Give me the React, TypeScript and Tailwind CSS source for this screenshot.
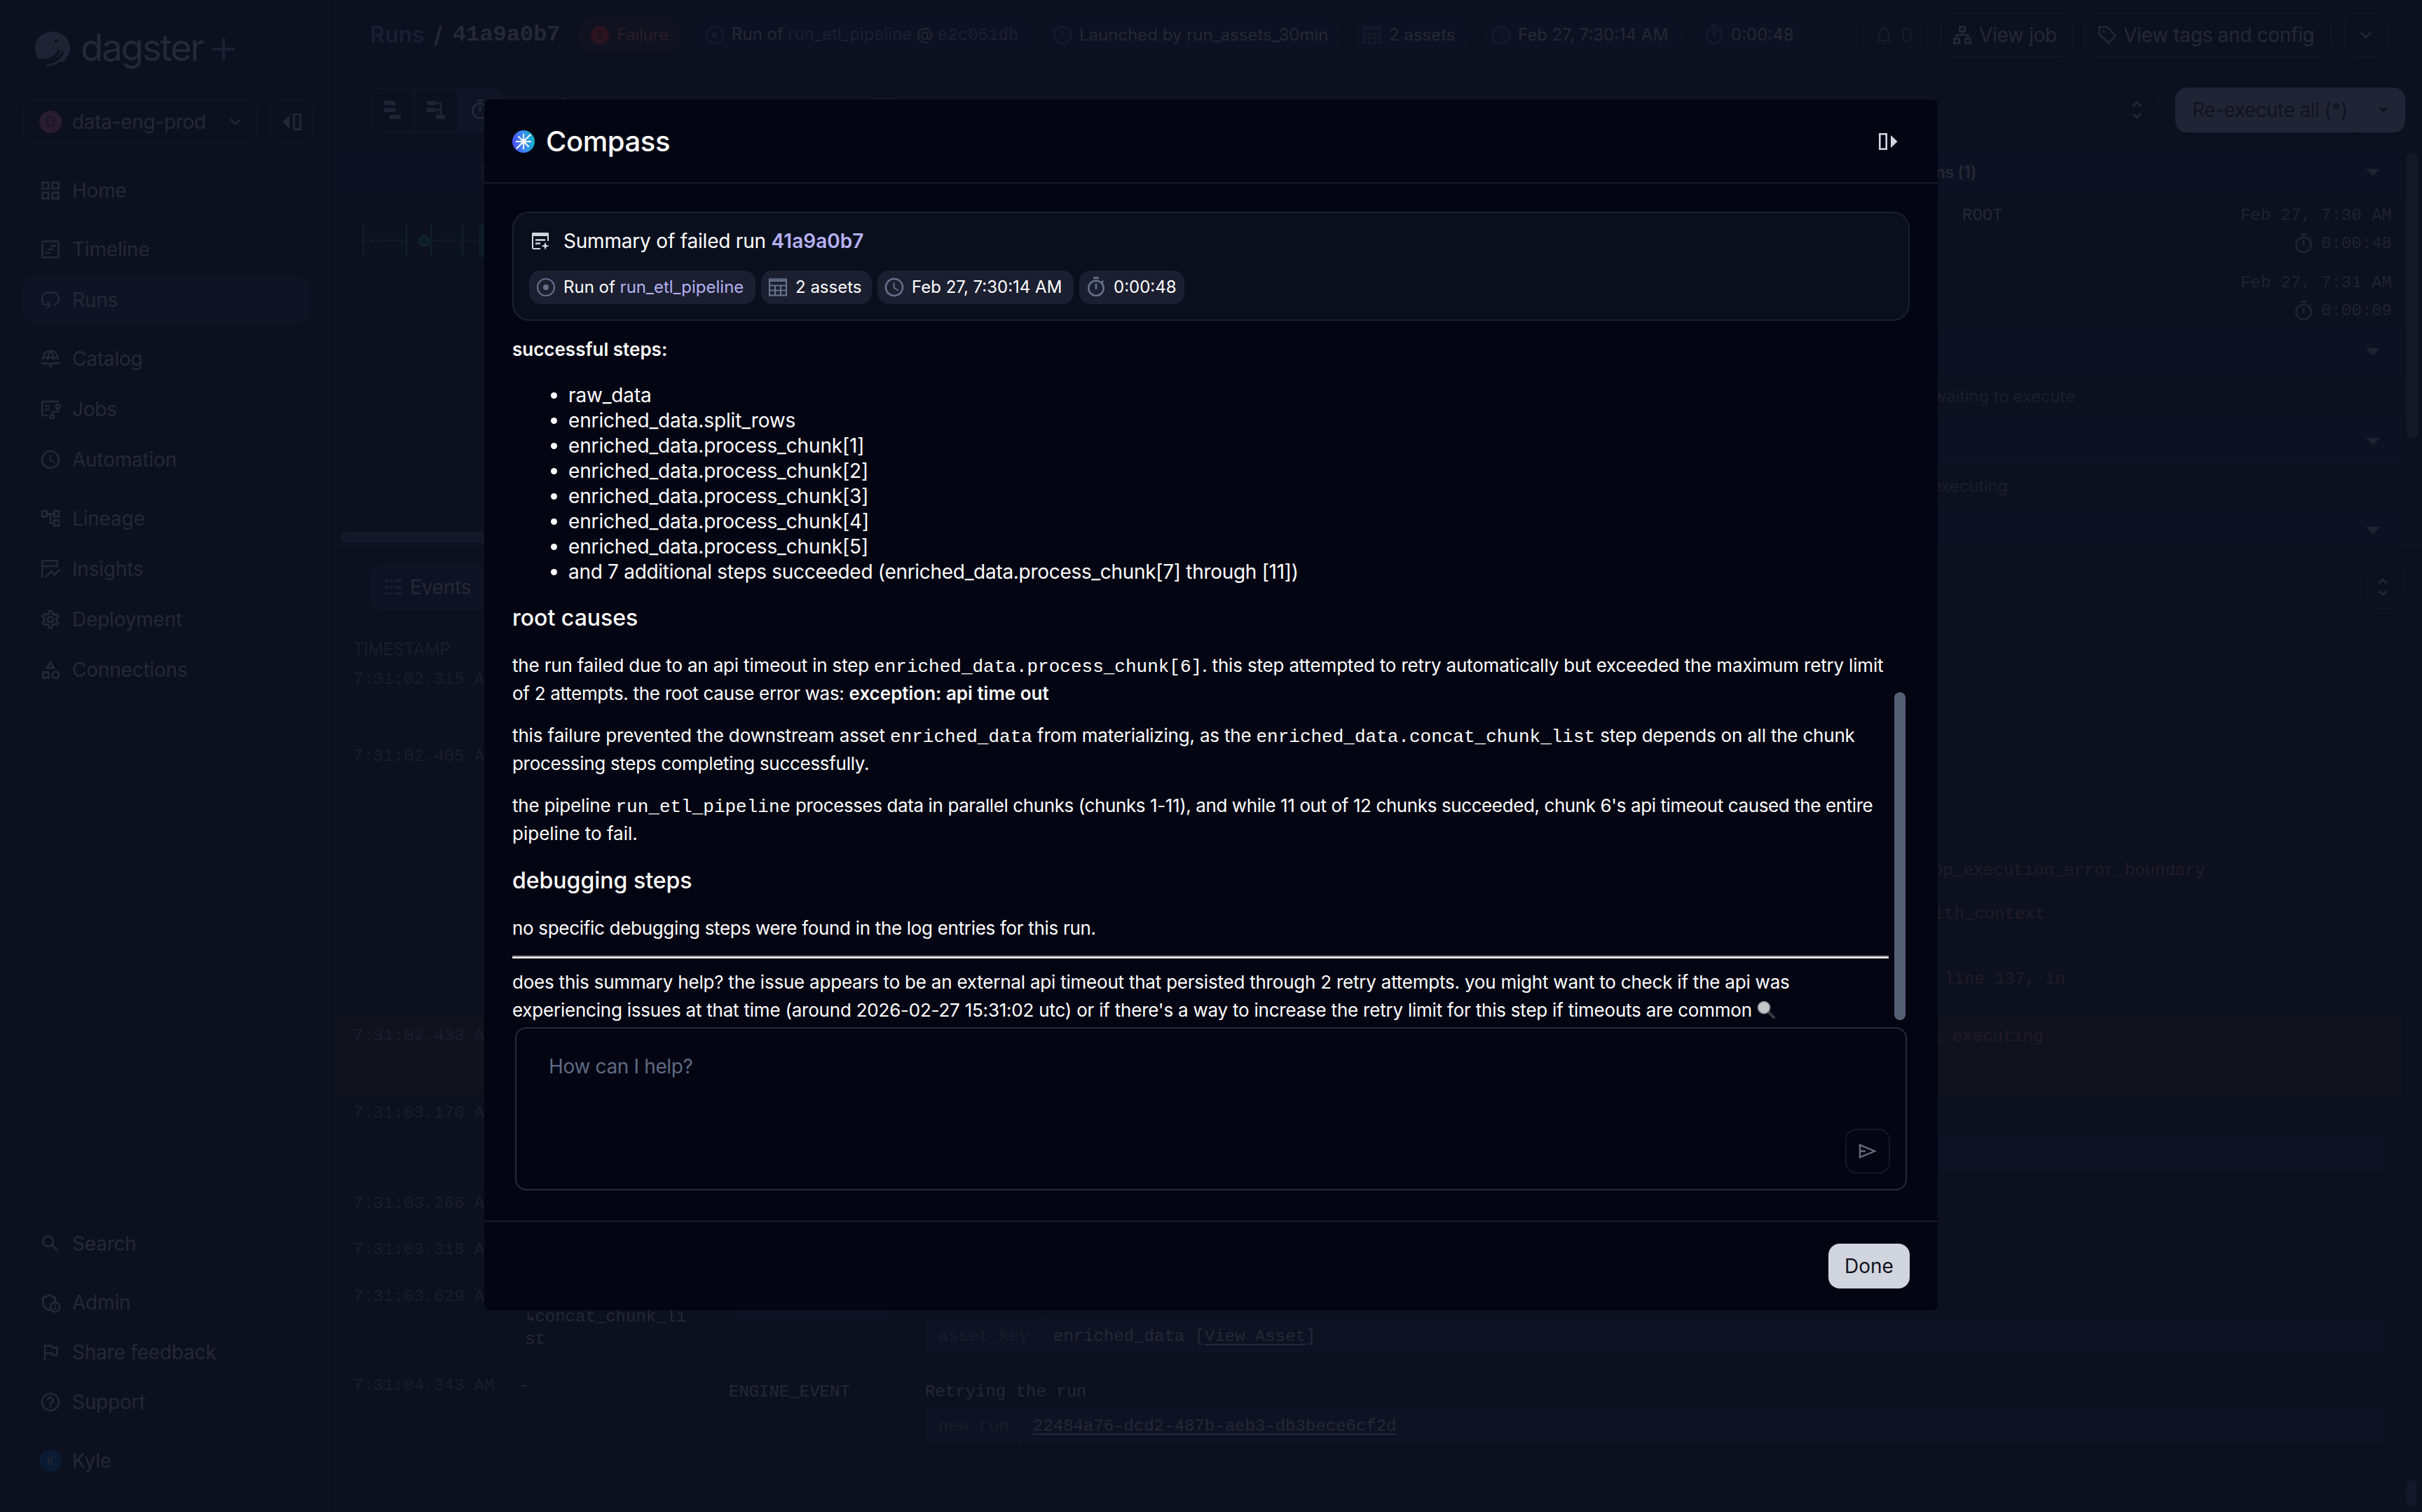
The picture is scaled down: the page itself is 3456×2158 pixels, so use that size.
import type { ReactNode } from "react";
import {
  MdAccessTime,
  MdError,
  MdGridView,
  MdHelpOutline,
  MdOutlineAccountTree,
  MdOutlineAdminPanelSettings,
  MdOutlineCategory,
  MdOutlineFlag,
  MdOutlineNotifications,
  MdOutlineSettings,
  MdOutlineTimer,
  MdSearch,
} from "react-icons/md";

type SvgProps = { className?: string };

/* ---------- Icons ---------- */

function TimelineIcon({ className }: SvgProps) {
  return (
    <svg viewBox="0 0 32 32" className={className} fill="none" stroke="currentColor" strokeWidth="2.6">
      <rect x="4.5" y="4.5" width="23" height="23" rx="1.5" />
      <path d="M16 11h8M12 16h8M8 21h8" />
    </svg>
  );
}

function RunsIcon({ className }: SvgProps) {
  return (
    <svg viewBox="0 0 32 32" className={className} fill="none" stroke="currentColor" strokeWidth="2.4">
      <path d="M12 23.5C7 23 4.2 20 4.2 16V14c0-4 3-8.500 8-8.500h7.600c5 0 8 4.500 8 8.500v1c0 4-2.800 7.500-7 8.500" />
      <path d="M11 18.500l4.500 5-4.500 4.500" />
    </svg>
  );
}

function CatalogIcon({ className }: SvgProps) {
  return (
    <svg viewBox="0 0 32 32" className={className} fill="none" stroke="currentColor" strokeWidth="2.4">
      <path d="M5 17.5C5 9.500 10 4.500 16 4.500s11 5 11 13M5 14.500h22M12 18c0-6 1.500-10 4-13M20 18c0-6-1.500-10-4-13" />
      <path d="M3 22.5h7.500c3 0 5 1.500 5.500 4 .5-2.500 2.500-4 5.500-4H29M16 25v4" strokeWidth="2.8" />
    </svg>
  );
}

function JobsIcon({ className }: SvgProps) {
  return (
    <svg viewBox="0 0 32 32" className={className} fill="none" stroke="currentColor" strokeWidth="2.5">
      <path d="M28 5H5.500C4.700 5 4.200 5.500 4.200 6.300v17.400c0 .8.500 1.300 1.300 1.300H12" />
      <path d="M8 11.500h7M8 16.500h7M26.500 15v4.500h-8V24" />
      <circle cx="26.500" cy="12" r="2.800" />
      <circle cx="18.500" cy="26.500" r="2.800" />
    </svg>
  );
}

function InsightsIcon({ className }: SvgProps) {
  return (
    <svg viewBox="0 0 32 32" className={className} fill="none" stroke="currentColor" strokeWidth="2.5">
      <path d="M6 27.500c-1 0-1.800-.6-1.800-1.500V5.500C4.200 4.700 4.700 4.200 5.500 4.200h19c.8 0 1.300.5 1.300 1.300V12H4.200" />
      <path d="M9 28l8-9 4.500 5.500L30 16.500" />
    </svg>
  );
}

function RunOfIcon({ className }: SvgProps) {
  return (
    <svg viewBox="0 0 32 32" className={className}>
      <circle cx="16" cy="16" r="12" fill="none" stroke="currentColor" strokeWidth="2.2" />
      <circle cx="16" cy="16" r="4" fill="currentColor" />
    </svg>
  );
}

function TableIcon({ className }: SvgProps) {
  return (
    <svg viewBox="0 0 32 32" className={className} fill="none" stroke="currentColor" strokeWidth="2.2">
      <rect x="4" y="4.500" width="24" height="23" />
      <path d="M4 7h24M4 13.500h24M4 20.500h24M12 13.500v14M20 13.500v14" />
    </svg>
  );
}

function SitemapIcon({ className }: SvgProps) {
  return (
    <svg viewBox="0 0 32 32" className={className} fill="none" stroke="currentColor" strokeWidth="2.6">
      <path d="M12.300 4.300h7.400v6.400h-7.400zM4.300 21.300h7.400v6.400H4.300zM20.300 21.300h7.400v6.400h-7.400zM16 10.700V16M8 21v-5h16v5" />
    </svg>
  );
}

function TagIcon({ className }: SvgProps) {
  return (
    <svg viewBox="0 0 32 32" className={className} fill="none" stroke="currentColor" strokeWidth="2.4">
      <path d="M4.500 4.500H16l11.500 12L18 27.500 4.500 15z" strokeLinejoin="round" />
      <circle cx="11" cy="11" r="1.800" fill="currentColor" stroke="none" />
    </svg>
  );
}

function ChevronDown({ className }: SvgProps) {
  return (
    <svg viewBox="0 0 16 10" className={className} fill="none" stroke="currentColor" strokeWidth="2.4">
      <path d="M1 1.200l7 7 7-7" />
    </svg>
  );
}

function SortChevrons({ className }: SvgProps) {
  return (
    <svg viewBox="0 0 14 26" className={className} fill="none" stroke="currentColor" strokeWidth="2.6">
      <path d="M1.500 7.500L7 2l5.500 5.500M1.500 18.500L7 24l5.500-5.500" />
    </svg>
  );
}

function Caret({ className }: SvgProps) {
  return (
    <svg viewBox="0 0 20 10" className={className} fill="currentColor">
      <path d="M0 0h20L10 10z" />
    </svg>
  );
}

function CollapseIcon({ className }: SvgProps) {
  return (
    <svg viewBox="0 0 28 24" className={className}>
      <rect x="1.300" y="1.300" width="9.400" height="21.400" fill="none" stroke="currentColor" strokeWidth="2.6" />
      <path d="M17 3l9.500 9L17 21z" fill="currentColor" />
    </svg>
  );
}

function SummaryIcon({ className }: SvgProps) {
  return (
    <svg viewBox="0 0 24 24" className={className} fill="none" stroke="currentColor" strokeWidth="2">
      <path d="M12 23H2.500C1.600 23 1 22.400 1 21.500V3h22v9" />
      <path d="M1 0h22a1 1 0 011 1v4H0V1a1 1 0 011-1z" fill="currentColor" stroke="none" />
      <path d="M5 10.500h14M5 15.500h7" strokeWidth="2.4" />
      <path d="M19 13.500l1.500 4 4 1.500-4 1.500-1.500 4-1.500-4-4-1.500 4-1.500z" fill="currentColor" stroke="none" />
    </svg>
  );
}

function SendIcon({ className }: SvgProps) {
  return (
    <svg viewBox="0 0 26 22" className={className} fill="none" stroke="currentColor" strokeWidth="2.4">
      <path d="M2 2.200L23 11 2 19.800V2.200zM2 11h8" />
    </svg>
  );
}

function CompassIcon({ className }: SvgProps) {
  return (
    <svg viewBox="0 0 32 32" className={className}>
      <defs>
        <linearGradient id="compass" x1="0" y1="0.6" x2="1" y2="0.4">
          <stop offset="0" stopColor="#4a4af5" />
          <stop offset="0.5" stopColor="#3b8cf6" />
          <stop offset="1" stopColor="#12b3c4" />
        </linearGradient>
      </defs>
      <circle cx="16" cy="16" r="16" fill="url(#compass)" />
      {/* four thin rays plus a long north-east / south-west needle */}
      <g stroke="#fff" strokeLinecap="round" strokeWidth="1.9">
        <path d="M16 5.800v20.400M5.800 16h20.400M9 9l14 14" />
        <path d="M6.500 25.500l19-19" strokeWidth="2.2" />
      </g>
      <circle cx="16" cy="16" r="3.400" fill="#fff" />
    </svg>
  );
}

function DagsterLogo({ className }: SvgProps) {
  return (
    <svg viewBox="0 0 50 50" className={className}>
      <path
        fill="currentColor"
        d="M25 0C10 0 0 11 0 24c0 6 2 11 4.500 14.500C18 40 28 37 33 27c1-2 3.500-.5 2.800 1.300C32 37 25 41 15 42c7 .5 17-1 23-13 1-2 3.600-.6 2.800 1.400C36 41 28 45 17.500 46.500c-1.500.5-1.200 3 .5 3 5 0 12-2 18-7 1 2 4.500 1.500 5.500-.5C46 36 50 31 50 24 50 11 40 0 25 0z"
      />
      <circle cx="30" cy="13.500" r="4.500" fill="#2b2a33" />
      <circle cx="30" cy="13.500" r="3" fill="#0d101f" />
      <path d="M5 41.500c10 4 24 0 29.500-14M20 46c9-2 16-7 19-16" fill="none" stroke="#0d101f" strokeWidth="1.6" />
    </svg>
  );
}

/* ---------- Left navigation ---------- */

function NavItem({ icon, label, active }: { icon: ReactNode; label: string; active?: boolean }) {
  return (
    <div
      className={
        active
          ? "flex h-[68px] items-center rounded-2xl bg-[#0f1324] pl-6"
          : "flex h-[68px] items-center pl-6"
      }
    >
      <span className="flex w-8 justify-center">{icon}</span>
      <span className="ml-[15px] whitespace-nowrap text-[28px] tracking-[-0.2px]">{label}</span>
    </div>
  );
}

function NavDivider() {
  return <div className="my-[7px] h-[2px] bg-[#0f1222]" />;
}

function Sidebar() {
  return (
    <aside className="flex h-[2158px] w-[480px] shrink-0 flex-col border-r-2 border-[#0f1222] pl-8 pr-[38px] text-[#252836]">
      <div className="mt-[40px] flex h-[60px] items-center pl-[18px]">
        <DagsterLogo className="h-[50px] w-[50px] text-[#202333]" />
        <span className="ml-[15px] w-[177px] whitespace-nowrap pb-1 text-[53px] leading-[60px] tracking-[-2.3px]">
          dagster
        </span>
        <svg viewBox="0 0 32 32" className="ml-[11px] h-8 w-8 text-[#1d2033]" stroke="currentColor" strokeWidth="4">
          <path d="M16 0v32M0 16h32" />
        </svg>
      </div>

      <div className="-mr-2 mt-[42px] flex gap-4">
        <div className="flex h-16 w-[336px] shrink-0 items-center rounded-2xl border-2 border-[#111526] pl-[22px] pr-[22px]">
          <span className="flex h-8 w-8 items-center justify-center rounded-full bg-[#2a1c30] text-[20px] text-[#151526]">
            D
          </span>
          <span className="ml-[15px] flex-1 whitespace-nowrap text-[28px] tracking-[-0.3px]">data-eng-prod</span>
          <ChevronDown className="h-[10px] w-4" />
        </div>
        <div className="flex h-16 w-16 shrink-0 items-center justify-center rounded-2xl border-2 border-[#111526]">
          <CollapseIcon className="h-6 w-7 rotate-180" />
        </div>
      </div>

      <nav className="mt-8 flex flex-col">
        <NavItem icon={<MdGridView className="h-[34px] w-[34px] shrink-0" />} label="Home" />
        <NavDivider />
        <NavItem icon={<TimelineIcon className="h-8 w-8" />} label="Timeline" />
        <div className="h-1" />
        <NavItem icon={<RunsIcon className="h-8 w-8" />} label="Runs" active />
        <NavDivider />
        <NavItem icon={<CatalogIcon className="h-8 w-8" />} label="Catalog" />
        <div className="h-1" />
        <NavItem icon={<JobsIcon className="h-8 w-8" />} label="Jobs" />
        <div className="h-1" />
        <NavItem icon={<MdAccessTime className="h-8 w-8" />} label="Automation" />
        <NavDivider />
        <NavItem icon={<MdOutlineAccountTree className="h-8 w-8" />} label="Lineage" />
        <div className="h-1" />
        <NavItem icon={<InsightsIcon className="h-8 w-8" />} label="Insights" />
        <div className="h-1" />
        <NavItem icon={<MdOutlineSettings className="h-8 w-8" />} label="Deployment" />
        <div className="h-1" />
        <NavItem icon={<MdOutlineCategory className="h-8 w-8" />} label="Connections" />
      </nav>

      <nav className="mb-[39px] mt-auto flex flex-col">
        <NavItem icon={<MdSearch className="h-8 w-8" />} label="Search" />
        <NavDivider />
        <NavItem icon={<MdOutlineAdminPanelSettings className="h-8 w-8" />} label="Admin" />
        <div className="h-[3px]" />
        <NavItem icon={<MdOutlineFlag className="h-8 w-8" />} label="Share feedback" />
        <div className="h-[3px]" />
        <NavItem icon={<MdHelpOutline className="h-8 w-8" />} label="Support" />
        <NavDivider />
        <NavItem
          icon={
            <span className="flex h-8 w-8 items-center justify-center rounded-full bg-[#0b1a33] text-[16px]">K</span>
          }
          label="Kyle"
        />
      </nav>
    </aside>
  );
}

/* ---------- Run header and toolbar ---------- */

function HeaderTag({ className, icon, children }: { className: string; icon: ReactNode; children: ReactNode }) {
  return (
    <div className={`flex h-12 shrink-0 items-center gap-2 whitespace-nowrap rounded-2xl text-[24px] ${className}`}>
      {icon}
      <span>{children}</span>
    </div>
  );
}

function RunHeader() {
  return (
    <header className="flex h-[102px] shrink-0 items-center border-b-2 border-[#0f1222] pl-[48px] text-[#252836]">
      <h1 className="flex w-[298px] shrink-0 whitespace-nowrap text-[32px] font-semibold">
        <span className="w-[91px] text-[#1b1e33]">Runs</span>
        <span className="w-[27px]">/</span>
        <span className="font-['Liberation_Mono',monospace]">41a9a0b7</span>
      </h1>
      <div className="flex w-[1831px] gap-6">
        <HeaderTag
          className="w-[144px] bg-[#10121f] pl-[14px] tracking-[-0.3px] text-[#2a1d26]"
          icon={<MdError className="h-8 w-8 shrink-0 text-[#2a1420]" />}
        >
          Failure
        </HeaderTag>
        <HeaderTag
          className="w-[476px] bg-[#0e1121] pl-[10px]"
          icon={<RunOfIcon className="h-8 w-8 shrink-0 text-[#171b2a]" />}
        >
          Run of <span className="text-[#1d1f35]">run_etl_pipeline</span> @{" "}
          <span className="font-['Liberation_Mono',monospace] text-[#1d1f35]">e2c051db</span>
        </HeaderTag>
        <HeaderTag
          className="w-[418px] bg-[#0e1121] pl-[6px]"
          icon={<MdAccessTime className="h-8 w-8 shrink-0 text-[#171b2a]" />}
        >
          Launched by run_assets_30min
        </HeaderTag>
        <HeaderTag
          className="w-[160px] bg-[#0e1121] pl-[6px]"
          icon={<TableIcon className="h-8 w-8 shrink-0 text-[#171b2a]" />}
        >
          2 assets
        </HeaderTag>
        <HeaderTag
          className="w-[280px] bg-[#0e1121] pl-[6px]"
          icon={<MdAccessTime className="h-8 w-8 shrink-0 text-[#171b2a]" />}
        >
          Feb 27, 7:30:14 AM
        </HeaderTag>
        <HeaderTag
          className="w-[146px] bg-[#0e1121] pl-[6px]"
          icon={<MdOutlineTimer className="h-8 w-8 shrink-0 text-[#171b2a]" />}
        >
          0:00:48
        </HeaderTag>
      </div>
      <div className="flex gap-4 whitespace-nowrap text-[28px] tracking-[-0.3px]">
        <div className="flex h-16 w-[95px] items-center gap-2 rounded-2xl border-2 border-[#0f1222] pl-[13px] text-[#171b2a]">
          <MdOutlineNotifications className="h-8 w-8" />0
        </div>
        <div className="flex h-16 w-[191px] items-center gap-2 rounded-2xl border-2 border-[#111526] pl-[14px]">
          <SitemapIcon className="h-8 w-8" />
          View job
        </div>
        <div className="flex h-16 w-[353px] items-center gap-[7px] rounded-2xl border-2 border-[#111526] pl-[14px]">
          <TagIcon className="h-8 w-8" />
          View tags and config
        </div>
        <div className="flex h-16 w-16 items-center justify-center rounded-2xl border-2 border-[#111526]">
          <ChevronDown className="h-[10px] w-4" />
        </div>
      </div>
    </header>
  );
}

function Toolbar() {
  return (
    <div className="flex h-[110px] shrink-0 items-center pl-[48px] pr-6 text-[#252836]">
      <div className="flex h-16 overflow-hidden rounded-2xl border-2 border-[#111526]">
        <div className="flex w-[62px] items-center justify-center border-r-2 border-[#111526]">
          <svg viewBox="0 0 26 26" className="h-[26px] w-[26px]" fill="#202333">
            <path d="M1 0h16v6H1zM1 10h16v6H1zM9 20h16v6H9z" />
          </svg>
        </div>
        <div className="flex w-[62px] items-center justify-center border-r-2 border-[#111526]">
          <svg viewBox="0 0 26 26" className="h-[26px] w-[26px]">
            <path d="M0 0h12v6H0zM0 10h12v6H0zM13 20h13v6H13z" fill="#202333" />
            <path d="M12 3h8v18M12 13h8" fill="none" stroke="#202333" strokeWidth="2.4" />
          </svg>
        </div>
        <div className="flex w-[62px] items-center justify-center bg-[#101425]">
          <MdOutlineTimer className="h-8 w-8" />
        </div>
      </div>
      {/* zoom slider knob and filter input, mostly covered by the dialog */}
      <div className="ml-[76px] h-[36px] w-[20px] rounded-full bg-[#141727]" />
      <div className="ml-[427px] h-[36px] w-[36px] rounded-lg bg-[#121627]" />
      <div className="ml-auto mr-6 flex h-16 w-[62px] items-center justify-center rounded-2xl border-2 border-[#101324]">
        <SortChevrons className="h-[26px] w-[14px]" />
      </div>
      <div className="flex h-16 w-[328px] items-center rounded-2xl bg-[#212434] text-[#11131f]">
        <span className="flex h-16 w-[262px] items-center whitespace-nowrap border-r-2 border-[#1f2232] pl-6 text-[28px] tracking-[-0.5px]">
          Re-execute all (*)
        </span>
        <Caret className="ml-[28px] h-[7px] w-[14px]" />
      </div>
    </div>
  );
}

/* ---------- Gantt chart and step sidebar ---------- */

function GanttChart() {
  return (
    <div className="flex w-[1900px] flex-col border-t-2 border-[#0f1222]">
      <div className="flex h-[65px] items-center border-b-2 border-[#0f1222] bg-[#0e1121] pl-[205px] text-[24px] text-[#191c2b]">
        5
      </div>
      <svg viewBox="0 0 240 90" className="h-[90px] w-[240px]" fill="none">
        <path d="M38 42h62v47H38zM135 42h45v47h-45z" fill="#0c1220" />
        <path d="M38 41v47M100 41v47M135 41v47M180 41v47" stroke="#10202f" strokeWidth="2" />
        <path d="M38 64h62M135 64h45" stroke="#10202f" strokeWidth="2" strokeDasharray="6 4" />
        <path d="M142 65h60" stroke="#111524" strokeWidth="2" />
        <circle cx="125" cy="65" r="7" fill="#0e1c25" stroke="#112833" strokeWidth="2" />
        <rect x="203" y="41" width="40" height="47" rx="3" fill="#0e1c25" />
      </svg>
      <div className="mt-auto px-[6px] pb-[3px]">
        <div className="h-4 rounded-full bg-[#151828]" />
      </div>
    </div>
  );
}

function PanelHeading({ children, className }: { children?: ReactNode; className: string }) {
  return (
    <div
      className={`flex shrink-0 items-center border-b-2 border-t-2 border-[#0f1222] bg-[#0e1121] pl-[24px] pr-[30px] text-[24px] font-semibold ${className}`}
    >
      {children}
      <Caret className="ml-auto h-[10px] w-5" />
    </div>
  );
}

const retries = [
  { id: "41a9a0b7", tag: "ROOT", date: "Feb 27, 7:30 AM", duration: "0:00:48" },
  { id: "22484a76", tag: "", date: "Feb 27, 7:31 AM", duration: "0:00:09" },
];

function StepSidebar() {
  return (
    <div className="flex flex-1">
      <div className="flex flex-1 flex-col pl-[220px] text-[#202331]">
        <PanelHeading className="mt-[2px] h-[64px]">
          <span className="w-[189px] whitespace-nowrap pl-[4px] tracking-[-0.6px] text-[#252836]">
            Re-executions (1)
          </span>
        </PanelHeading>
        <div className="flex h-[192px] shrink-0 flex-col gap-4 pt-[10px]">
          {retries.map((run) => (
            <div key={run.id} className="flex h-20 pr-[13px] font-['Liberation_Mono',monospace] text-[24px]">
              <span className="w-[166px] text-right leading-10">{run.id}</span>
              <span className="ml-[34px] leading-10 text-[#252836]">{run.tag}</span>
              <div className="ml-auto flex flex-col items-end">
                <span className="leading-10">{run.date}</span>
                <span className="flex items-center gap-[9px] leading-10">
                  <MdOutlineTimer className="h-8 w-8" />
                  {run.duration}
                </span>
              </div>
            </div>
          ))}
        </div>
        <PanelHeading className="h-[64px]" />
        <p className="flex h-16 shrink-0 items-center whitespace-nowrap text-[24px] text-[#1b1e2c]">
          <span className="w-[360px] pl-[10px] tracking-[-0.2px]">No steps are waiting to execute</span>
        </p>
        <PanelHeading className="h-[64px]" />
        <p className="flex h-16 shrink-0 items-center whitespace-nowrap text-[24px] text-[#1b1e2c]">
          <span className="w-[265px] text-right tracking-[-0.2px]">No steps are executing</span>
        </p>
        <PanelHeading className="h-[54px] border-b-0 pt-2" />
      </div>
      <div className="w-[30px] px-2 pt-[6px]">
        <div className="h-[408px] w-4 rounded-full bg-[#141827]" />
      </div>
    </div>
  );
}

/* ---------- Event log ---------- */

function LogRow({
  className,
  time,
  step,
  event,
  children,
}: {
  className: string;
  time: ReactNode;
  step?: ReactNode;
  event?: ReactNode;
  children?: ReactNode;
}) {
  return (
    <div className={`flex shrink-0 border-b-2 border-[#0f1222] leading-8 ${className}`}>
      <div className="w-[236px] whitespace-nowrap border-r-2 border-[#0f1222] pl-6 pt-[10px] text-[#1b1e2c]">
        {time}
      </div>
      <div className="w-[298px] border-r-2 border-[#0f1222] pl-6 pt-[10px]">{step}</div>
      <div className="w-[280px] border-r-2 border-[#0f1222] pl-[26px] pt-[19px]">{event}</div>
      <div className="flex-1 pl-[26px] pr-6">{children}</div>
    </div>
  );
}

function EventLog() {
  return (
    <section className="flex min-h-0 flex-1 border-t-2 border-[#0f1222]">
      <div className="flex flex-1 flex-col font-['Liberation_Mono',monospace] text-[24px] text-[#252836]">
        {/* first row is scrolled slightly under the table header */}
        <LogRow className="h-[94px]" time={<p className="-mt-4">7:31:02.315 AM</p>} />
        <LogRow className="h-[399px]" time="7:31:02.405 AM">
          <div className="flex flex-col pt-[173px] text-right text-[#221c28]">
            <span className="w-[1827px]">op_execution_error_boundary</span>
            <span className="mt-[30px] w-[1598px]">with_context</span>
            <span className="mt-[61px] w-[1627px]">line 137, in</span>
          </div>
        </LogRow>
        <LogRow className="h-[110px] bg-[#10121e]" time="7:31:02.433 AM">
          <p className="w-[1610px] pt-[11px] text-right text-[#221c28]">t executing.</p>
        </LogRow>
        <LogRow className="h-[129px]" time="7:31:03.170 AM">
          <div className="mt-[58px] h-[51px] bg-[#0f1222]" />
        </LogRow>
        <LogRow className="h-[66px]" time="7:31:03.266 AM" />
        <LogRow className="h-[67px]" time="7:31:03.318 AM" />
        <LogRow
          className="h-[127px]"
          time="7:31:03.629 AM"
          step={
            <p className="pl-[9px] pt-[29px]">
              <span className="inline-block w-[14.4px] font-['DejaVu_Sans',sans-serif] text-[18px] leading-none">↳</span>
              concat_chunk_li
              <br />
              st
            </p>
          }
          event={<div className="h-[37px] w-[238px] rounded-lg bg-[#0f1222]" />}
        >
          <div className="mt-[56px] flex h-[51px] items-center bg-[#0f1222] pl-[19px]">
            <span className="w-[147px] border-r-2 border-[#111525] pt-[2px] leading-[49px] text-[#1a1d2b]">
              asset_key
            </span>
            <span className="pl-[17px] pt-[2px]">
              enriched_data [<span className="underline decoration-2 underline-offset-4">View Asset</span>]
            </span>
          </div>
        </LogRow>
        <LogRow className="h-[206px] border-b-0" time="7:31:04.343 AM" step="-" event="ENGINE_EVENT">
          <p className="pt-[19px]">Retrying the run</p>
          <div className="mt-[6px] flex h-[51px] items-center bg-[#0f1222] pl-[19px]">
            <span className="w-[118px] border-r-2 border-[#111525] pt-[2px] leading-[49px] text-[#1a1d2b]">
              new run
            </span>
            <span className="ml-[17px] pt-[2px] underline decoration-2 underline-offset-4">
              22484a76-dcd2-487b-aeb3-db3bece6cf2d
            </span>
          </div>
        </LogRow>
      </div>
      <div className="flex w-[30px] items-end px-2 pb-[8px]">
        <div className="h-[38px] w-4 rounded-full bg-[#151828]" />
      </div>
    </section>
  );
}

function RunPage() {
  return (
    <main className="flex h-[2158px] flex-1 flex-col">
      <RunHeader />
      <Toolbar />
      <div className="flex h-[568px] shrink-0 border-b-2 border-[#111525]">
        <GanttChart />
        <StepSidebar />
      </div>
      <div className="flex h-[114px] shrink-0 items-center border-b-2 border-[#0f1222] pl-[48px] pr-6 pt-[3px] text-[28px] text-[#252836]">
        <div className="flex h-16 w-[200px] items-center gap-[8px] rounded-2xl border-2 border-[#111526] bg-[#0f1222] pl-[15px] tracking-[-0.2px]">
          <svg viewBox="0 0 32 32" className="h-8 w-8" stroke="#1d2030" strokeWidth="2.8">
            <path d="M4 7h4M11 7h4M18 7h10M4 16h4M11 16h4M18 16h10M4 25h4M11 25h4M18 25h10" />
          </svg>
          Events
        </div>
        <div className="ml-auto flex h-16 w-16 items-center justify-center rounded-2xl border-2 border-[#101324]">
          <SortChevrons className="h-[26px] w-[14px]" />
        </div>
      </div>
      <div className="flex h-[64px] shrink-0 items-center pl-6 pt-px text-[24px] tracking-[-0.2px] text-[#1b1e2c]">
        TIMESTAMP
      </div>
      <EventLog />
    </main>
  );
}

/* ---------- Compass dialog ---------- */

const successfulSteps = [
  "raw_data",
  "enriched_data.split_rows",
  "enriched_data.process_chunk[1]",
  "enriched_data.process_chunk[2]",
  "enriched_data.process_chunk[3]",
  "enriched_data.process_chunk[4]",
  "enriched_data.process_chunk[5]",
];

function Code({ children }: { children: ReactNode }) {
  return (
    <code className="font-['Liberation_Mono',monospace] text-[26px] leading-none tracking-normal">{children}</code>
  );
}

function Chip({ className, icon, children }: { className: string; icon: ReactNode; children: ReactNode }) {
  return (
    <div className={`flex h-12 items-center gap-[9px] whitespace-nowrap rounded-2xl bg-[#1b1f30] pl-2 text-[24px] ${className}`}>
      {icon}
      <span>{children}</span>
    </div>
  );
}

function SummaryCard() {
  return (
    <div className="flex h-[156px] shrink-0 flex-col rounded-3xl border-2 border-[#1b2030] bg-[#0a0f1e] pl-[22px] pt-[24px]">
      <div className="flex h-8 items-center pl-1">
        <SummaryIcon className="h-6 w-6 overflow-visible text-[#d1d5de]" />
        <p className="ml-[21px] whitespace-nowrap text-[28px] tracking-[-0.2px]">
          Summary of failed run <span className="font-semibold tracking-normal text-[#b5b0f2]">41a9a0b7</span>
        </p>
      </div>
      <div className="mt-[26px] flex gap-2">
        <Chip className="w-[323px]" icon={<RunOfIcon className="h-8 w-8 text-[#65708a]" />}>
          Run of <span className="text-[#b5b0f2]">run_etl_pipeline</span>
        </Chip>
        <Chip className="w-[158px]" icon={<TableIcon className="h-8 w-8 text-[#65708a]" />}>
          2 assets
        </Chip>
        <Chip className="w-[280px]" icon={<MdAccessTime className="h-8 w-8 text-[#65708a]" />}>
          Feb 27, 7:30:14 AM
        </Chip>
        <Chip className="w-[150px]" icon={<MdOutlineTimer className="h-8 w-8 text-[#65708a]" />}>
          0:00:48
        </Chip>
      </div>
    </div>
  );
}

function CompassDialog() {
  return (
    <div className="absolute left-[691px] top-[142px] flex h-[1728px] w-[2074px] flex-col rounded-lg bg-[#030513] text-white">
      <div className="flex h-[120px] shrink-0 items-center border-b-2 border-[#161a29] pl-10 pr-[56px] pt-px">
        <CompassIcon className="h-8 w-8" />
        <h2 className="ml-[16px] text-[40px] font-medium tracking-[-0.4px]">Compass</h2>
        <CollapseIcon className="ml-auto h-6 w-7 text-[#d1d5de]" />
      </div>

      <div className="flex flex-1 flex-col px-10 pt-10">
        <SummaryCard />

        <div className="flex h-[998px] shrink-0">
          <div className="w-[1964px] whitespace-nowrap text-[26px] leading-[40px]">
            <p className="mt-[21px] font-semibold">successful steps:</p>
            <ul className="mt-[27px] list-disc pl-20 text-[28px] leading-[36px] tracking-[-0.15px]">
              {successfulSteps.map((step) => (
                <li key={step}>{step}</li>
              ))}
              <li className="tracking-[-0.3px]">
                and 7 additional steps succeeded (enriched_data.process_chunk[7] through [11])
              </li>
            </ul>

            <h3 className="mt-[28px] text-[32px] font-medium leading-[40px]">root causes</h3>
            <p className="mt-[28px] tracking-[-0.18px]">
              the run failed due to an api timeout in step <Code>enriched_data.process_chunk[6]</Code>. this step
              attempted to retry automatically but exceeded the maximum retry limit
            </p>
            <p className="tracking-[-0.3px]">
              of 2 attempts. the root cause error was:{" "}
              <b className="font-semibold tracking-normal">exception: api time out</b>
            </p>
            <p className="mt-[20px] tracking-[-0.2px]">
              <span className="tracking-[-0.13px]">this failure prevented the downstream asset </span>
              <Code>enriched_data</Code> from materializing, as the <Code>enriched_data.concat_chunk_list</Code> step
              depends on all the chunk
            </p>
            <p className="tracking-[-0.3px]">processing steps completing successfully.</p>
            <p className="mt-[20px] tracking-[-0.4px]">
              <span className="tracking-[-0.2px]">the pipeline </span>
              <Code>run_etl_pipeline</Code> processes data in parallel chunks (chunks 1-11), and while 11 out of 12
              chunks succeeded, chunk 6's api timeout caused the entire
            </p>
            <p>pipeline to fail.</p>

            <h3 className="mt-[27px] text-[32px] font-medium leading-[40px]">debugging steps</h3>
            <p className="mt-[28px] tracking-[-0.31px]">
              no specific debugging steps were found in the log entries for this run.
            </p>

            <div className="mt-[19px] h-1 border-b-2 border-t-2 border-b-[#eeeeee] border-t-[#9a9a9a]" />
            <p className="mt-[14px] tracking-[-0.22px]">
              does this summary help? the issue appears to be an external api timeout that persisted through 2 retry
              attempts. you might want to check if the api was
              <br />
              experiencing issues at that time (around 2026-02-27 15:31:02 utc) or if there's a way to increase the
              retry limit for this step if timeouts are common{" "}
              <svg viewBox="0 0 26 26" className="inline h-[26px] w-[26px] align-[-3px]">
                <path d="M16 16l8 8" stroke="#3a3a3c" strokeWidth="4" strokeLinecap="round" />
                <circle cx="10" cy="10" r="8.500" fill="#c4c6c9" stroke="#8b8f94" strokeWidth="1.6" />
              </svg>
            </p>
          </div>
          <div className="flex flex-1 items-end pl-2">
            <div className="h-[468px] w-4 rounded-full bg-[#566074]" />
          </div>
        </div>

        <div className="ml-1 mt-[10px] flex h-[233px] w-[1986px] rounded-2xl border-2 border-[#252b3c] pl-[46px] pr-[22px] pt-[34px] text-[28px] text-[#5f6a82]">
          <span className="leading-10 tracking-[-0.35px]">How can I help?</span>
          <div className="ml-auto mt-auto mb-[22px] flex h-16 w-16 items-center justify-center rounded-2xl border-2 border-[#141827] text-[#686b7a]">
            <SendIcon className="h-[22px] w-[26px]" />
          </div>
        </div>
      </div>

      <div className="flex h-[128px] shrink-0 items-center justify-end border-t-2 border-[#161a29] pr-10">
        <button className="h-16 w-[116px] rounded-2xl bg-[#d1d5de] text-[28px] text-[#11131f]">Done</button>
      </div>
    </div>
  );
}

export default function App() {
  return (
    <div className="relative flex h-[2158px] w-[3456px] overflow-hidden bg-[#0d101f] font-['Inter',sans-serif]">
      <Sidebar />
      <RunPage />
      <CompassDialog />
    </div>
  );
}
